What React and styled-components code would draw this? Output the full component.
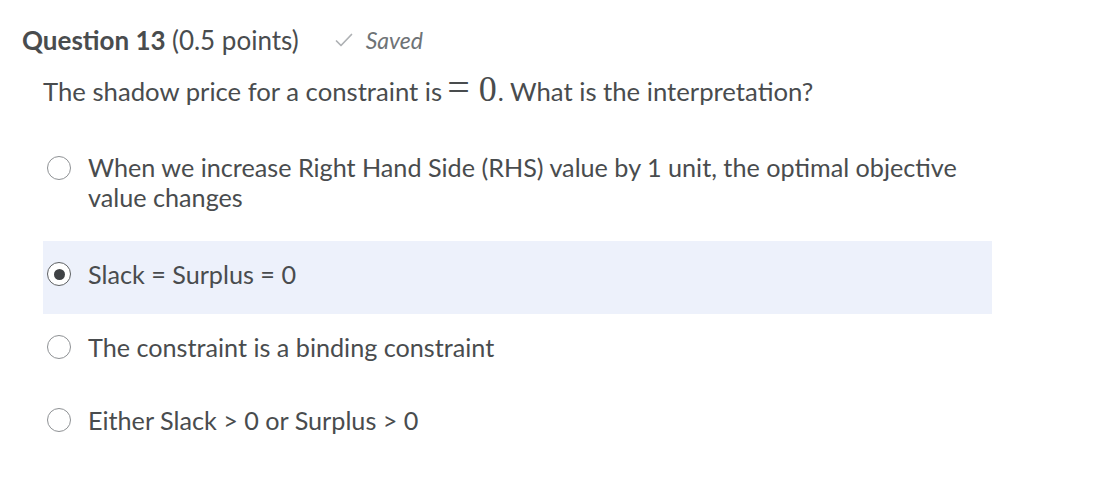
import React from "react";
import styled, { createGlobalStyle } from "styled-components";

const Global = createGlobalStyle`
  html, body { margin: 0; padding: 0; background: #ffffff; }
  body { font-family: Lato, "Noto Sans", sans-serif; color: #494c4e; }
`;

const Page = styled.div`
  padding: 24px 0 0 22px;
  width: 1098px;
  box-sizing: border-box;
`;

const Header = styled.div`
  display: flex;
  align-items: center;
  height: 32px;
`;

const Title = styled.h2`
  margin: 0;
  font-size: 26px;
  font-weight: 700;
  line-height: 32px;
  color: #494c4e;
`;

const Points = styled.span`
  font-weight: 400;
`;

const Saved = styled.span`
  display: flex;
  align-items: center;
  gap: 13px;
  margin-left: 36px;
  font-size: 23px;
  font-style: italic;
  color: #6e7376;
`;

const Body = styled.div`
  padding-left: 21px;
`;

const Prompt = styled.p`
  margin: 16px 0 0 0;
  font-size: 25.7px;
  line-height: 32px;
  display: flex;
  align-items: baseline;
  white-space: pre;
`;

const MathOp = styled.span`
  font-family: "Liberation Serif", "DejaVu Serif", serif;
  font-size: ${(p) => p.$size || 36}px;
  margin: ${(p) => p.$m || "0"};
  line-height: 32px;
`;

const Options = styled.div`
  display: flex;
  flex-direction: column;
  margin-top: 34px;
  width: 949px;
`;

const Option = styled.label`
  display: flex;
  align-items: ${(p) => (p.$multi ? "flex-start" : "center")};
  padding: ${(p) => (p.$multi ? "11px 4px 0" : "0 4px 7px")};
  background: ${(p) => (p.$selected ? "#edf1fb" : "transparent")};
  height: ${(p) => p.$h || 73}px;
  box-sizing: border-box;
  font-size: 25.2px;
  line-height: 30px;
`;

const Radio = styled.span`
  flex: none;
  width: 24px;
  height: 24px;
  border-radius: 50%;
  border: 1.5px solid ${(p) => (p.$checked ? "#5d6063" : "#8e9194")};
  background: #fff;
  box-sizing: border-box;
  margin-top: ${(p) => (p.$multi ? "4px" : "0")};
  margin-right: 17px;
  display: flex;
  align-items: center;
  justify-content: center;
  &::after {
    content: "";
    display: ${(p) => (p.$checked ? "block" : "none")};
    width: 11px;
    height: 11px;
    border-radius: 50%;
    background: #3f4245;
  }
`;

const OptionText = styled.span`
  color: #494c4e;
`;

const Check = () => (
  <svg width="18" height="14" viewBox="0 0 18 14" fill="none">
    <path d="M1.5 8 L6 12.5 L16.5 1.5" stroke="#aeb1b4" strokeWidth="1.7" strokeLinecap="round" strokeLinejoin="round" />
  </svg>
);

export default function App() {
  return (
    <>
      <Global />
      <Page>
        <Header>
          <Title>
            Question 13 <Points>(0.5 points)</Points>
          </Title>
          <Saved>
            <Check />
            Saved
          </Saved>
        </Header>
        <Body>
          <Prompt>
            The shadow price for a constraint is
            <MathOp $size={40} $m="0 9px 0 5px">=</MathOp>
            <MathOp $size={36} $m="0 1px 0 0">0</MathOp>. What is the interpretation?
          </Prompt>
          <Options>
            <Option $multi $h={100}>
              <Radio $multi />
              <OptionText>
                When we increase Right Hand Side (RHS) value by 1 unit, the optimal objective
                <br />
                value changes
              </OptionText>
            </Option>
            <Option $selected>
              <Radio $checked />
              <OptionText>Slack = Surplus = 0</OptionText>
            </Option>
            <Option>
              <Radio />
              <OptionText>The constraint is a binding constraint</OptionText>
            </Option>
            <Option>
              <Radio />
              <OptionText>Either Slack &gt; 0 or Surplus &gt; 0</OptionText>
            </Option>
          </Options>
        </Body>
      </Page>
    </>
  );
}
